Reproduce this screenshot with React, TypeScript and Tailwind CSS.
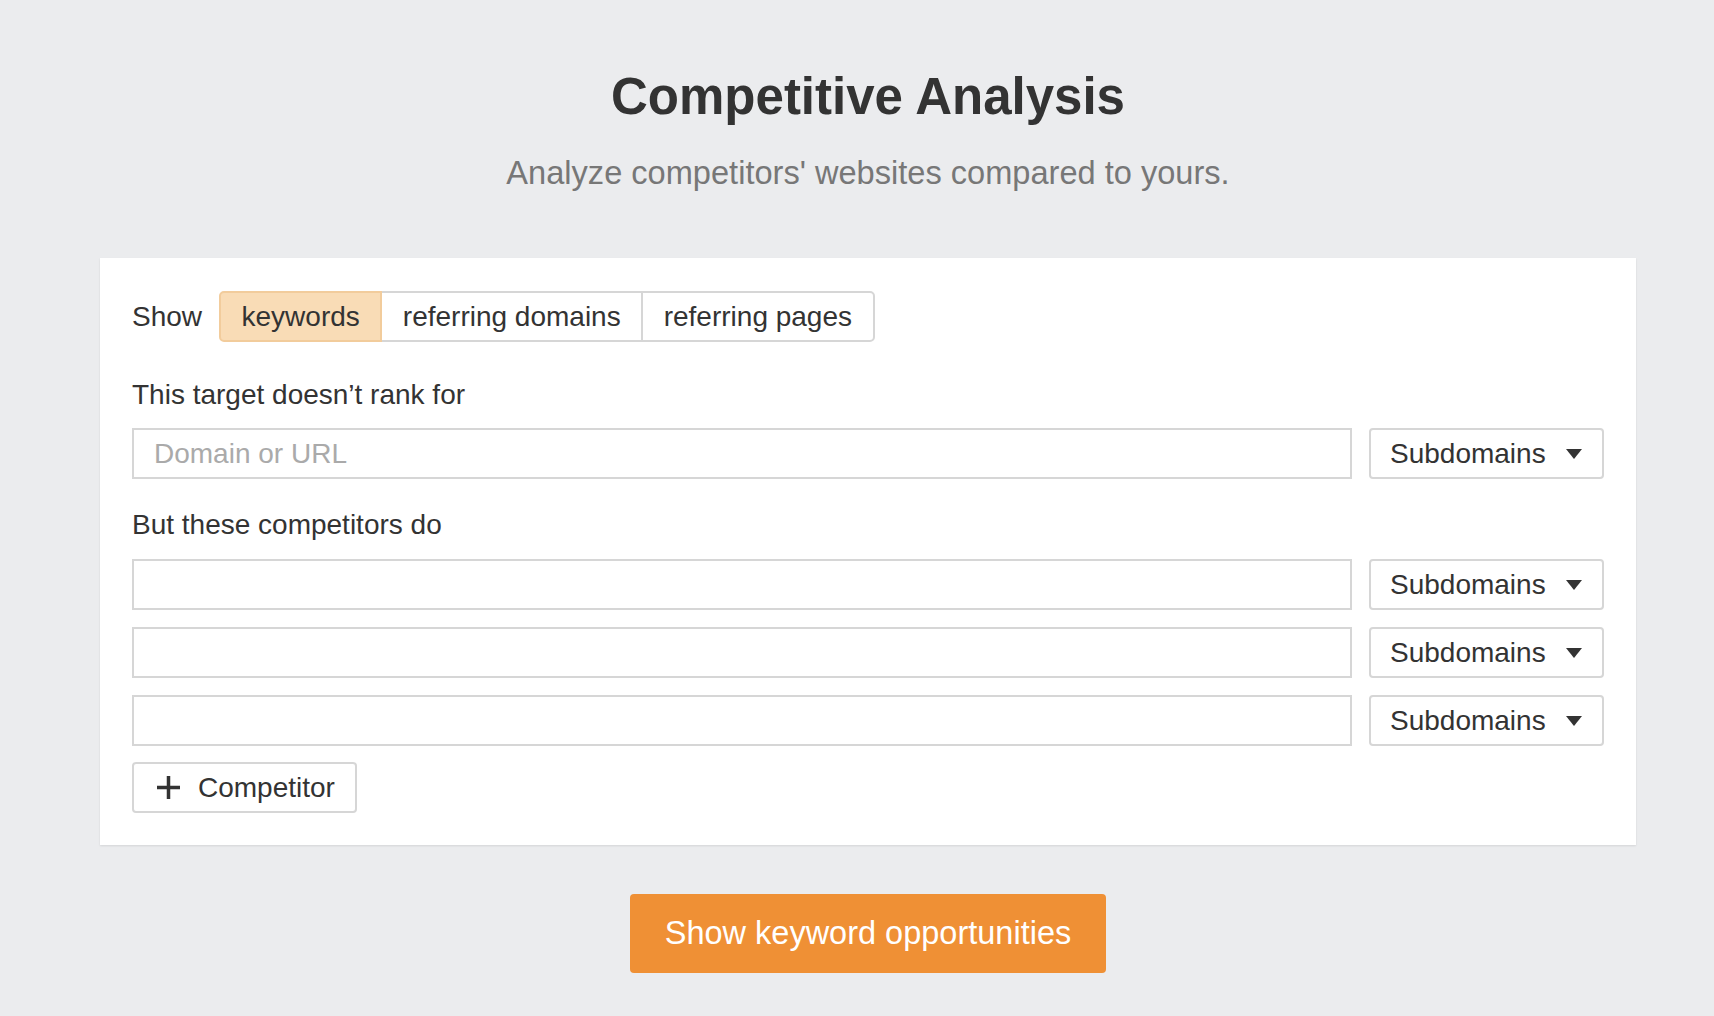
import { useState } from 'react';

const tabs = ['keywords', 'referring domains', 'referring pages'];

function ModeSelect() {
  return (
    <button
      type="button"
      className="flex h-[51px] w-[235px] shrink-0 items-center justify-between rounded-[4px] border-2 border-[#d6d6d6] bg-white pl-[19px] pr-[20px] text-[28px] text-[#333]"
    >
      <span>Subdomains</span>
      <svg width="16" height="10" viewBox="0 0 16 10" className="mt-[1px]">
        <path d="M0 0 H16 L8 10 Z" fill="#333" />
      </svg>
    </button>
  );
}

function TargetRow({ placeholder }: { placeholder?: string }) {
  return (
    <div className="flex gap-[17px]">
      <input
        type="text"
        placeholder={placeholder}
        className="h-[51px] min-w-0 flex-1 border-2 border-[#d6d6d6] bg-white px-[20px] text-[28px] text-[#333] outline-none placeholder:text-[#aaa]"
      />
      <ModeSelect />
    </div>
  );
}

export default function App() {
  const [active, setActive] = useState('keywords');

  return (
    <div
      className="h-screen overflow-hidden bg-[#ebecee] pl-[100px] pr-[78px] pt-[67px] text-[#333]"
      style={{ fontFamily: '"Liberation Sans", Arial, Helvetica, sans-serif' }}
    >
      <h1 className="text-center text-[51px] font-bold leading-[60px] text-[#333]">
        Competitive Analysis
      </h1>
      <p className="mt-[27px] text-center text-[32.6px] leading-[37px] text-[#777]">
        Analyze competitors' websites compared to yours.
      </p>

      <div className="mt-[67px] bg-white px-[32px] pt-[33px] pb-[32px] shadow-[0_1px_2px_rgba(0,0,0,0.1)]">
        <div className="flex items-center">
          <span className="mr-[17px] text-[28px]">Show</span>
          <div className="flex h-[51px]">
            {tabs.map((t, i) => (
              <button
                key={t}
                type="button"
                onClick={() => setActive(t)}
                className={`border-2 px-[20.5px] text-[28px] ${
                  active === t ? 'border-[#f2cc9c] bg-[#f9dcb6]' : 'border-[#d6d6d6] bg-white'
                } ${i === 0 ? 'rounded-l-[5px]' : '-ml-[2px]'} ${
                  i === tabs.length - 1 ? 'rounded-r-[5px]' : ''
                } ${active === t ? 'relative z-10' : ''}`}
              >
                {t}
              </button>
            ))}
          </div>
        </div>

        <div className="mt-[36px] text-[28px] leading-[34px]">This target doesn’t rank for</div>
        <div className="mt-[16px]">
          <TargetRow placeholder="Domain or URL" />
        </div>

        <div className="mt-[29px] text-[28px] leading-[34px]">But these competitors do</div>
        <div className="mt-[17px] flex flex-col gap-[17px]">
          <TargetRow />
          <TargetRow />
          <TargetRow />
        </div>

        <button
          type="button"
          className="mt-[16px] flex h-[51px] items-center gap-[17px] rounded-[4px] border-2 border-[#d6d6d6] bg-white pl-[22px] pr-[20px] text-[28px]"
        >
          <svg width="25" height="25" viewBox="0 0 25 25">
            <path d="M12.5 1 V24 M1 12.5 H24" stroke="#333" strokeWidth="3.5" />
          </svg>
          <span>Competitor</span>
        </button>
      </div>

      <div className="mt-[49px] flex justify-center">
        <button
          type="button"
          className="h-[79px] w-[476px] rounded-[4px] bg-[#ef9035] text-[32.5px] text-white"
        >
          Show keyword opportunities
        </button>
      </div>
    </div>
  );
}
